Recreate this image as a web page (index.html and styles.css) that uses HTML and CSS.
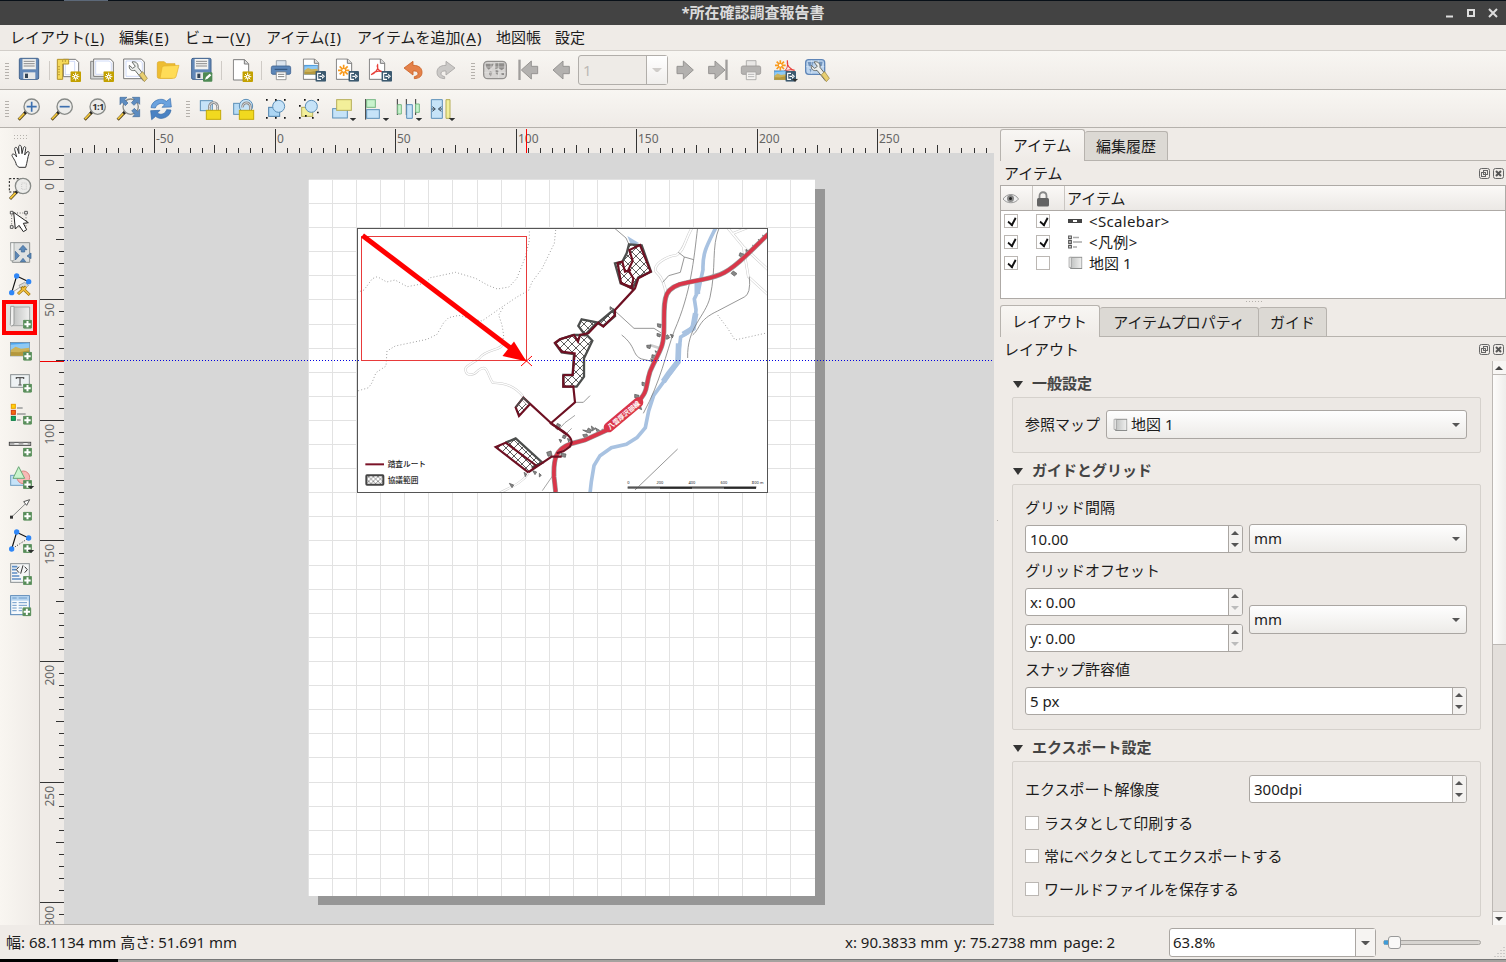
FILE: index.html
```html
<!DOCTYPE html>
<html lang="ja">
<head>
<meta charset="utf-8">
<title>所在確認調査報告書</title>
<link rel="stylesheet" href="styles.css">
</head>
<body>
<svg class="defs" width="0" height="0">
  <defs>
    <symbol id="plus" viewBox="0 0 27 27" width="27" height="27"><rect width="27" height="27" rx="4" fill="#568b58"/><rect x="1.5" y="1.5" width="24" height="24" rx="3" fill="none" stroke="#7aa77b" stroke-width="1.5"/><path d="M13.5 4v19M4 13.5h19" stroke="#fff" stroke-width="6"/></symbol>
    <symbol id="gear" viewBox="0 0 32 32" width="32" height="32"><rect width="32" height="32" rx="3" fill="#c3a100"/><path d="M16 4v24M5 16h22M8 8l16 16M24 8L8 24" stroke="#fff" stroke-width="3"/><circle cx="16" cy="16" r="6" fill="#fff"/><circle cx="16" cy="16" r="2.5" fill="#c3a100"/></symbol>
    <symbol id="export" viewBox="0 0 32 32" width="32" height="32"><rect width="32" height="32" rx="3" fill="#3c5a70"/><path d="M17 7H7v18h10M12 16h13" fill="none" stroke="#fff" stroke-width="3.5"/><path d="M20 8l9 8-9 8z" fill="#fff"/><path d="M21.500 13l3.500 3-3.500 3z" fill="#3c5a70"/></symbol>
    <symbol id="sheet" viewBox="0 0 60 66" width="60" height="66"><path d="M2 2h34l12 12v49H2z" fill="#fff" stroke="#7b7b7b" stroke-width="3"/><path d="M35 2v13h13" fill="#ddd" stroke="#7b7b7b" stroke-width="3"/></symbol>
    <symbol id="lens" viewBox="0 0 72 72" width="72" height="72"><path d="M5 66l22-23" stroke="#5c4a20" stroke-width="9"/><path d="M6 64l20-21" stroke="#f7cb3c" stroke-width="5"/><path d="M22 48l8-9" stroke="#222" stroke-width="8"/><circle cx="44" cy="27" r="23" fill="#ececea" stroke="#888b88" stroke-width="4"/></symbol>
    <symbol id="wrench" viewBox="0 0 60 66" width="60" height="66"><path d="M12 4c10-3 20 4 18 16l23 30-8 9-24-30C10 32 2 26 4 14l10 9 8-6z" fill="#eceeec" stroke="#666a67" stroke-width="3"/><path d="M34 42l10-9 14 20-9 10z" fill="#e9cf70" stroke="#8f7b3c" stroke-width="2"/></symbol>
    <symbol id="drop" viewBox="0 0 20 10" width="20" height="10"><path d="M0 0h20L10 9z" fill="#2e3030"/></symbol>
    <symbol id="arrow" viewBox="0 0 60 60" width="60" height="60"><path d="M2 30L32 3v16h19v22H32v16z" fill="#b3b1af" stroke="#969492" stroke-width="3"/></symbol>
    <symbol id="mapicon" viewBox="0 0 42 38" width="42" height="38"><path d="M8 3h33v33H8z" fill="url(#roll)" stroke="#8a8c8b" stroke-width="3"/><path d="M3 3h7v30H3z" fill="#e7e7e6" stroke="#999" stroke-width="2"/></symbol>
    <symbol id="pic" viewBox="0 0 60 44" width="60" height="44"><rect x="1" y="1" width="58" height="41" fill="#4da6ee" stroke="#6b8196" stroke-width="2"/><path d="M2 8l56-4v20H2z" fill="#8fc9f4"/><path d="M2 24l15-10 16 6 25-3v24H2z" fill="#cdb35a"/><path d="M2 30l25 1 31-6v16H2z" fill="#b5983d"/></symbol>
    <linearGradient id="roll"><stop offset="0" stop-color="#bfc1c0"/><stop offset="1" stop-color="#f1f1f0"/></linearGradient>
    <pattern id="hatch" width="24" height="24" patternUnits="userSpaceOnUse"><path d="M0 0l24 24M24 0L0 24" stroke="#222" stroke-width="2.200"/></pattern>
    <pattern id="hatch-fine" width="14" height="14" patternUnits="userSpaceOnUse"><path d="M0 0l14 14M14 0L0 14" stroke="#333" stroke-width="1.500"/></pattern>
  </defs>
</svg>
<div class="window">
  <div class="desktop-top"></div>
  <header class="titlebar">
    <span class="titlebar-text">*所在確認調査報告書</span>
    <svg class="window-buttons" width="60" height="24" viewBox="1446 1 60 24"><path d="M1445 16.500h8" stroke="#ddd" stroke-width="2"/><rect x="1468" y="10" width="6" height="6" fill="none" stroke="#ddd" stroke-width="2"/><path d="M1489 9l8 8M1497 9l-8 8" stroke="#ddd" stroke-width="2"/></svg>
  </header>
  <nav class="menubar">
    <span>レイアウト(<u>L</u>)</span><span>編集(<u>E</u>)</span><span>ビュー(<u>V</u>)</span><span>アイテム(<u>I</u>)</span><span>アイテムを追加(<u>A</u>)</span><span>地図帳</span><span>設定</span>
  </nav>

  <div class="toolbar toolbar-main">
    <i class="grip first"></i>
    <svg class="tool" viewBox="36 162 99 99"><rect x="58" y="175" width="58" height="63" rx="4" fill="#6288b8" stroke="#43648e" stroke-width="3"/><rect x="67" y="177" width="41" height="31" fill="#f2f2f0" stroke="#8a9bb0" stroke-width="1"/><path d="M71 184h33M71 191h33M71 198h33" stroke="#777" stroke-width="2.500"/><rect x="70" y="217" width="36" height="20" fill="#e6e8e8"/><rect x="75" y="221" width="9" height="13" fill="#345"/></svg>
    <i class="sep"></i>
    <svg class="tool" viewBox="156 162 99 99"><path d="M190 178h37l9 9v43h-46z" fill="#fff" stroke="#777" stroke-width="3"/><path d="M196 184h28v40h-28z" fill="none" stroke="#b9c8f4" stroke-width="2"/><path d="M172 178h34v14h-18v46h-16z" fill="#f5d95a" stroke="#b3922a" stroke-width="3"/><path d="M174 200h6M174 208h6M174 216h6M174 224h6M188 180v6M196 180v6" stroke="#a58422" stroke-width="2"/><use href="#gear" x="211" y="214"/></svg>
    <svg class="tool" viewBox="255 162 99 99"><path d="M272 184h44v53h-44z" fill="#d2d4d3" stroke="#888" stroke-width="3"/><path d="M281 177h50l9 9v43h-59z" fill="#fff" stroke="#777" stroke-width="3"/><path d="M287 183h41l6 6v34h-47z" fill="none" stroke="#b9c8f4" stroke-width="2"/><use href="#gear" x="310" y="214"/></svg>
    <svg class="tool" viewBox="354 162 99 99"><path d="M371 177h53l9 9v50h-62z" fill="#fff" stroke="#777" stroke-width="3"/><path d="M378 183h44l5 6v40h-49z" fill="none" stroke="#b9c8f4" stroke-width="2"/><use href="#wrench" x="384" y="182"/></svg>
    <svg class="tool" viewBox="453 162 99 99"><path d="M472 190q0-5 5-5h15l8 6h25v10l-5 30q-1 4-5 4h-38q-5 0-5-5z" fill="#eebd31" stroke="#d9a520" stroke-width="2"/><path d="M480 235l6-32q1-5 6-5l45-2-9 34q-2 5-7 5z" fill="#ffdc57" stroke="#e3b12d" stroke-width="2"/></svg>
    <svg class="tool" viewBox="552 162 99 99"><rect x="575" y="175" width="58" height="63" rx="4" fill="#6288b8" stroke="#43648e" stroke-width="3"/><rect x="584" y="177" width="41" height="31" fill="#f2f2f0"/><path d="M588 184h33M588 191h33M588 198h33" stroke="#777" stroke-width="2.500"/><rect x="587" y="217" width="36" height="20" fill="#e6e8e8"/><rect x="592" y="221" width="9" height="13" fill="#345"/><rect x="609" y="217" width="28" height="28" rx="3" fill="#4e8a54"/><path d="M615 239l3-8 11-10 5 5-11 10z" fill="#fff"/></svg>
    <i class="sep wide"></i>
    <svg class="tool" viewBox="675 162 99 99"><use href="#sheet" x="698" y="177"/><use href="#gear" x="727" y="214"/></svg>
    <i class="sep narrow"></i>
    <svg class="tool" viewBox="792 162 99 99"><path d="M829 182h29v20h-29z" fill="#dce5ee" stroke="#8894a0" stroke-width="2.500"/><rect x="814" y="198" width="58" height="25" rx="5" fill="#5c86b8" stroke="#3e6392" stroke-width="2.500"/><path d="M824 208h38" stroke="#2f5078" stroke-width="3"/><path d="M829 216h29v23h-29z" fill="#fff" stroke="#888" stroke-width="2.500"/><path d="M834 223h19M834 230h19" stroke="#666" stroke-width="2.500"/></svg>
    <svg class="tool" viewBox="891 162 99 99"><use href="#sheet" x="908" y="175"/><svg x="912" y="194" width="42" height="31" viewBox="0 0 60 44"><use href="#pic"/></svg><use href="#export" x="946" y="213"/></svg>
    <svg class="tool" viewBox="990 162 99 99"><use href="#sheet" x="1007" y="175"/><path d="M1031 194v34M1014 211h34M1019 199l24 24M1043 199l-24 24" stroke="#f99a1c" stroke-width="5"/><circle cx="1031" cy="211" r="4" fill="#fff"/><use href="#export" x="1045" y="213"/></svg>
    <svg class="tool" viewBox="1089 162 99 99"><use href="#sheet" x="1106" y="175"/><path d="M1113 224c14-4 23-18 20-30-5 6 1 18 13 21-10-3-23 0-30 7" fill="none" stroke="#e8403a" stroke-width="3.500"/><use href="#export" x="1144" y="213"/></svg>
    <svg class="tool" viewBox="1188 162 99 99"><path d="M1212 204l27-20v12c20 0 27 10 27 21 0 13-9 18-23 19v-6c8-2 12-5 11-11-1-5-7-7-15-6v12z" fill="#e4814a" stroke="#cb6327" stroke-width="2.500"/></svg>
    <svg class="tool" viewBox="1287 162 99 99"><path d="M1365 204l-27-20v12c-20 0-27 10-27 21 0 13 9 18 23 19v-6c-8-2-12-5-11-11 1-5 7-7 15-6v12z" fill="#cbc9c7" stroke="#a7a5a3" stroke-width="2.500"/></svg>
    <i class="grip mid"></i>
    <svg class="tool" viewBox="84 162 99 99"><rect x="101" y="184" width="68" height="52" rx="12" fill="#d6d4d2" stroke="#92908e" stroke-width="4"/><path d="M107 191h24l-5 11-10 7-8-8zM120 213l7 3-4 14-6-8zM136 190h27v15l-8 6-10-7-9 4zM137 210l10 2-5 13-5-5zM154 219h8v6h-7z" fill="#8f8d8b"/><path d="M103 201h64M103 218h64M123 186v48M146 186v48" stroke="#e9e7e5" stroke-width="1.500"/></svg>
    <svg class="tool" viewBox="183 162 99 99"><path d="M205 179h7v61h-7z" fill="#a09e9c"/><use href="#arrow" x="212" y="180"/></svg>
    <svg class="tool" viewBox="282 162 99 99"><use href="#arrow" x="307" y="180"/></svg>
    <div class="page-combo"><span>1</span><b></b></div>
    <svg class="tool" viewBox="654 162 99 99"><use href="#arrow" transform="translate(732 180) scale(-1 1)"/></svg>
    <svg class="tool" viewBox="753 162 99 99"><use href="#arrow" transform="translate(827 180) scale(-1 1)"/><path d="M826 179h7v61h-7z" fill="#a09e9c"/></svg>
    <svg class="tool" viewBox="852 162 99 99"><path d="M889 182h29v20h-29z" fill="#e9e7e5" stroke="#a5a3a1" stroke-width="2.500"/><rect x="874" y="198" width="58" height="25" rx="5" fill="#b5b3b1" stroke="#9a9896" stroke-width="2.500"/><path d="M889 216h29v23h-29z" fill="#f5f3f1" stroke="#a5a3a1" stroke-width="2.500"/><path d="M894 223h19M894 230h19" stroke="#aaa" stroke-width="2.500"/></svg>
    <svg class="tool" viewBox="951 162 99 99"><path d="M991 181v31M975 196h32M980 185l22 22M1002 185l-22 22" stroke="#f99a1c" stroke-width="5"/><circle cx="991" cy="196" r="4" fill="#fff"/><path d="M997 218c12-6 19-20 15-37-3 16 8 27 22 30-12-3-26-1-33 6" fill="none" stroke="#e8403a" stroke-width="3.500"/><svg x="972" y="211" width="38" height="30" viewBox="0 0 60 44" preserveAspectRatio="none"><use href="#pic"/></svg><use href="#export" x="1006" y="213"/><use href="#drop" x="1025" y="236"/></svg>
    <svg class="tool" viewBox="1050 162 99 99"><rect x="1067" y="179" width="57" height="44" rx="9" fill="#bcd4ee" stroke="#5f86b8" stroke-width="4"/><path d="M1073 186h18l-4 12-10 2zM1104 185h14l-3 14-11-3zM1078 207l8 1-3 10z" fill="#7194bd"/><path d="M1068 200h55M1085 181v40M1105 181v40" stroke="#e6f0fa" stroke-width="1.500"/><use href="#wrench" x="1080" y="182"/></svg>
  </div>

  <div class="toolbar toolbar-nav">
    <i class="grip first"></i>
    <svg class="tool" viewBox="36 276 99 99"><use href="#lens" x="51" y="293"/><path d="M95 305v30M80 320h30" stroke="#3d70b0" stroke-width="5"/></svg>
    <svg class="tool" viewBox="135 276 99 99"><use href="#lens" x="150" y="293"/><path d="M179 320h30" stroke="#3d70b0" stroke-width="5"/></svg>
    <svg class="tool" viewBox="234 276 99 99"><use href="#lens" x="249" y="293"/><text x="294" y="330" text-anchor="middle" class="one-one">1:1</text></svg>
    <svg class="tool" viewBox="333 276 99 99"><use href="#lens" x="348" y="293"/><path d="M360 292h21l-7 7 10 10-8 8-10-10-6 7zM419 292v21l-7-7-10 10-8-8 10-10-7-6zM419 350h-21l7-7-10-10 8-8 10 10 6-7z" fill="#5d8cc0" stroke="#41699a" stroke-width="2"/></svg>
    <svg class="tool" viewBox="432 276 99 99"><path d="M453 323c2-22 32-33 46-19l12-9 3 26-28 1 8-8c-12-9-25 0-28 10z" fill="#6ba2de" stroke="#3b70ad" stroke-width="2"/><path d="M513 330c-2 22-32 33-46 19l-12 10-3-27 28-1-8 8c12 9 25 0 28-10z" fill="#4a82c3" stroke="#3268a5" stroke-width="2"/></svg>
    <i class="grip mid"></i>
    <svg class="tool" viewBox="579 276 99 99"><rect x="601" y="302" width="36" height="30" fill="#c6e3f8" stroke="#5b8fb8" stroke-width="3"/><path d="M628 332v-10c0-19 25-19 25 0v10" fill="none" stroke="#888" stroke-width="8"/><path d="M628 332v-10c0-19 25-19 25 0v10" fill="none" stroke="#e4e4e4" stroke-width="3"/><rect x="619" y="331" width="43" height="27" fill="#f1d91f" stroke="#c5aa08" stroke-width="3"/></svg>
    <svg class="tool" viewBox="678 276 99 99"><rect x="701" y="310" width="32" height="33" fill="#b7dbf5" stroke="#5b8fb8" stroke-width="3"/><circle cx="738" cy="318" r="20" fill="#c6e3f8" stroke="#5b8fb8" stroke-width="3"/><path d="M751 332v-12c-1-17-25-14-23 2" fill="none" stroke="#888" stroke-width="8"/><path d="M751 332v-12c-1-17-25-14-23 2" fill="none" stroke="#e4e4e4" stroke-width="3"/><rect x="718" y="331" width="43" height="27" fill="#f1d91f" stroke="#c5aa08" stroke-width="3"/></svg>
    <svg class="tool" viewBox="777 276 99 99"><rect x="806" y="322" width="33" height="27" fill="#acd6f4" stroke="#4a7fab" stroke-width="3"/><circle cx="836" cy="319" r="18" fill="#c6e3f8" stroke="#5b8fb8" stroke-width="3"/><path d="M798 297h5v5h-5zM852 297h5v5h-5zM825 297h5v5h-5zM798 351h5v5h-5zM825 351h5v5h-5zM852 351h5v5h-5z" fill="#111"/></svg>
    <svg class="tool" viewBox="876 276 99 99"><rect x="905" y="322" width="33" height="27" fill="#f3ef9a" stroke="#b5ad57" stroke-width="3"/><circle cx="934" cy="319" r="18" fill="#c6e3f8" stroke="#5b8fb8" stroke-width="3"/><path d="M912 297h5v5h-5zM952 297h5v5h-5zM897 315h5v5h-5zM951 335h5v5h-5zM897 351h5v5h-5zM915 345h5v5h-5zM936 351h5v5h-5z" fill="#111"/></svg>
    <svg class="tool" viewBox="975 276 99 99"><rect x="998" y="326" width="44" height="28" fill="#c6e3f8" stroke="#5b8fb8" stroke-width="3"/><rect x="1010" y="299" width="44" height="32" fill="#f3ef9a" stroke="#b5ad57" stroke-width="3"/><use href="#drop" x="1049" y="354"/></svg>
    <svg class="tool" viewBox="1074 276 99 99"><path d="M1097 297v62" stroke="#333" stroke-width="3"/><rect x="1100" y="299" width="26" height="23" fill="#c8f3cd" stroke="#76b783" stroke-width="3"/><rect x="1100" y="329" width="38" height="26" fill="#c6e3f8" stroke="#5b8fb8" stroke-width="3"/><use href="#drop" x="1148" y="354"/></svg>
    <svg class="tool" viewBox="1173 276 99 99"><path d="M1192 297v48M1219 297v48M1247 297v48" stroke="#333" stroke-width="3"/><path d="M1193 314h11v28h-11zM1247 312h11v25h-11z" fill="#c8f3cd" stroke="#76b783" stroke-width="3"/><path d="M1220 314h17v41h-17z" fill="#c6e3f8" stroke="#5b8fb8" stroke-width="3"/><use href="#drop" x="1247" y="354"/></svg>
    <svg class="tool" viewBox="1272 276 99 99"><path d="M1294 299h33v56h-33z" fill="#c6e3f8" stroke="#5b8fb8" stroke-width="3"/><path d="M1338 299h12v56h-12z" fill="#f3ef9a" stroke="#b5ad57" stroke-width="3"/><path d="M1297 320l9 7-9 7M1324 320l-9 7 9 7" fill="none" stroke="#345" stroke-width="3"/><path d="M1295 327h8M1326 327h-8" stroke="#345" stroke-width="3"/><use href="#drop" x="1346" y="354"/></svg>
  </div>

  <main class="body">
    <aside class="toolbox">
      <i class="hgrip"></i>
      <svg class="vtool" viewBox="12 63 99 96"><path d="M49 135C48 122 34 109 36 104c4-5 10 1 14 7L44 88c-1-7 6-8 8-2l5 15-1-20c0-7 7-7 8 0l2 20 4-17c2-6 8-5 7 2l-3 19 7-9c4-3 8 0 6 5-4 10-5 25-10 41H57z" fill="#fff" stroke="#333" stroke-width="3"/></svg>
      <svg class="vtool" viewBox="12 159 99 96"><path d="M28 176h38v40H28z" fill="none" stroke="#111" stroke-width="3" stroke-dasharray="6 5"/><use href="#lens" x="25" y="171"/><path d="M65 189h14v19H65z" fill="none" stroke="#bbb" stroke-width="2" stroke-dasharray="3"/></svg>
      <svg class="vtool" viewBox="12 255 99 96"><path d="M35 279h43v42H35z" fill="none" stroke="#666" stroke-width="3" stroke-dasharray="3 5"/><path d="M31 274h8v8h-8zM74 274h8v8h-8zM31 317h8v8h-8z" fill="#fff" stroke="#555" stroke-width="3"/><path d="M41 277l5 50 11-11 13 19 10-6-10-19 15-2z" fill="#fff" stroke="#222" stroke-width="3"/></svg>
      <svg class="vtool" viewBox="12 351 99 96"><path d="M32 368h57v59H37z" fill="#dfe1e0" stroke="#8d9190" stroke-width="3"/><path d="M32 368h10v54H32z" fill="#f5f5f4" stroke="#8d9190" stroke-width="2"/><path d="M69 376l12 13h-7v7H64v-7h-7zM46 394l12 13-12 13zM93 399v17l-12-8zM61 425l8-10 8 10z" fill="#5c89b8" stroke="#38618f" stroke-width="2"/></svg>
      <svg class="vtool" viewBox="12 447 99 96"><path d="M35 518l15-50 36 17" fill="none" stroke="#111" stroke-width="3.500"/><path d="M35 518l50-32" stroke="#444" stroke-width="3" stroke-dasharray="3 4"/><path d="M57 496l17-9 12 9-9 8-8-4-7 4z" fill="#d7d9d8" stroke="#888" stroke-width="2"/><path d="M54 522l24-22M64 501l25 24" stroke="#96700c" stroke-width="9"/><path d="M55 521l23-20M66 503l22 21" stroke="#f1bd3b" stroke-width="5"/><g fill="#2f86f6"><circle cx="50" cy="468" r="8"/><circle cx="86" cy="485" r="8"/><circle cx="35" cy="518" r="8"/></g></svg>
      <svg class="vtool active" viewBox="15 549 87 87"><path d="M38 561h51v56H38z" fill="url(#roll)" stroke="#a4a6a5" stroke-width="3"/><path d="M32 559h10v54l-7 6-4-5z" fill="#f0f0ef" stroke="#9a9c9b" stroke-width="3"/><use href="#plus" x="69" y="599"/></svg>
      <svg class="vtool" viewBox="12 639 99 96"><use href="#pic" x="30" y="666"/><use href="#plus" x="69" y="695"/></svg>
      <svg class="vtool" viewBox="12 -15 99 96"><rect x="32" y="14" width="56" height="38" fill="#eef2f4" stroke="#8a9092" stroke-width="3"/><path d="M49 27v-4h22v4M60 23v22M55 45h10" fill="none" stroke="#555" stroke-width="3.500"/><use href="#plus" x="69" y="41"/></svg>
      <svg class="vtool" viewBox="12 81 99 96"><path d="M51 114h17M51 132h26M51 150h11" stroke="#999b9a" stroke-width="5"/><g stroke-width="3"><rect x="34" y="103" width="12" height="12" fill="#ffd20b" stroke="#e99d00"/><rect x="34" y="121" width="12" height="12" fill="#f26b11" stroke="#cf3a0b"/><rect x="34" y="139" width="12" height="12" fill="#0ea65d" stroke="#087a40"/></g><use href="#plus" x="69" y="137"/></svg>
      <svg class="vtool" viewBox="12 177 99 96"><rect x="28" y="217" width="64" height="9" fill="#f1f1f0" stroke="#444" stroke-width="3"/><path d="M30 221.500h13M56 221.500h14M83 221.500h8" stroke="#aaa" stroke-width="6"/><use href="#plus" x="69" y="233"/></svg>
      <svg class="vtool" viewBox="12 273 99 96"><rect x="32" y="316" width="40" height="30" fill="#c6e3f8" stroke="#6f9ec2" stroke-width="3"/><circle cx="70" cy="322" r="19" fill="#f7b9b6" stroke="#dc8580" stroke-width="3"/><path d="M56 290l18 35H39z" fill="#c9f4cd" stroke="#68a876" stroke-width="3"/><use href="#plus" x="69" y="330"/><use href="#drop" x="83" y="348"/></svg>
      <svg class="vtool" viewBox="12 369 99 96"><path d="M35 441l46-44" stroke="#858786" stroke-width="3"/><path d="M89 389l-18 6 9 11z" fill="#fff" stroke="#555" stroke-width="3"/><rect x="30" y="437" width="9" height="9" fill="#333"/><use href="#plus" x="69" y="425"/></svg>
      <svg class="vtool" viewBox="12 465 99 96"><path d="M35 537l15-50 36 17" fill="none" stroke="#111" stroke-width="3.500"/><path d="M38 535l47-30" stroke="#222" stroke-width="3" stroke-dasharray="3 5"/><g fill="#2f86f6"><circle cx="50" cy="486" r="8"/><circle cx="86" cy="504" r="8"/><circle cx="35" cy="537" r="8"/></g><use href="#plus" x="69" y="522"/><use href="#drop" x="83" y="540"/></svg>
      <svg class="vtool" viewBox="12 561 99 96"><rect x="32" y="581" width="56" height="56" fill="#f4f6f7" stroke="#8a9092" stroke-width="3"/><path d="M36 590h16M36 599h12M36 609h16M36 618h22M36 627h27" stroke="#5b8cc4" stroke-width="5"/><path d="M57 590l-8 9 8 9M74 590l8 9-8 9M69 586l-7 25" fill="none" stroke="#333" stroke-width="3"/><use href="#plus" x="69" y="618"/></svg>
      <svg class="vtool" viewBox="12 657 99 96"><rect x="32" y="677" width="56" height="57" fill="#f7fafc" stroke="#5384b5" stroke-width="3"/><path d="M33 678h54v14H33z" fill="#b4d3ef"/><path d="M37 684h13M56 684h25M37 698h13M56 698h25M37 706h13M56 706h25M37 714h13M56 714h10M37 722h13M56 722h10" stroke="#6f9bc9" stroke-width="3"/><use href="#plus" x="67" y="712"/></svg>
    </aside>

    <section class="stage">
      <svg id="ruler-h" class="ruler-h" viewBox="40 128 954 25"></svg>
      <svg id="ruler-v" class="ruler-v" viewBox="40 153 24 771"></svg>
      <svg class="canvas" viewBox="64 153 930 771">
        <path d="M318 189h507v716H318z" fill="#969696"/>
        <path d="M309 180h506v716H309z" fill="#fff"/>
        <g id="grid" fill="#e2e2e2"></g>
        <rect x="357.500" y="228.500" width="410" height="264" fill="#fff" stroke="#555" shape-rendering="crispEdges"/>
        <svg x="358" y="229" width="409" height="263" viewBox="358 229 409 263">
          <g transform="translate(350 220) scale(.33333)" fill="none">
            <g stroke="#777" stroke-width="2.500" stroke-dasharray="2.500 7"><path d="M22 217l20-7 25-34 15-6 28 16 25-6 37 20 52-10 18-17 75-16 60 18 35 20 30 12 35-6 23-25 26-65 12-50V28"/><path d="M617 30l-4 40-37 76-30 40-10 25-35 20-45 30-60 42-25-5-45-12-30 7-15 15-20 35-30 15-95 20-25 15-3 45-30 20-12 30-10 15-40 12"/><path d="M458 265l-12 20 10 30 5 30-5 30"/></g>
            <path d="M458 370c0 22-50 16-70 45-20 15-45 24-42 35 4 20 26 16 38 2 30-24 26 10 44 36 40 2 66 10 92 42M535 760c-20 30-50 40-85 58" stroke="#ccc" stroke-width="7"/><path d="M458 370c0 22-50 16-70 45-20 15-45 24-42 35 4 20 26 16 38 2 30-24 26 10 44 36 40 2 66 10 92 42M535 760c-20 30-50 40-85 58" stroke="#fff" stroke-width="4"/>
            <path d="M577 812l38-55M625 630l20-22 30-22M640 650l25-25" stroke="#777" stroke-width="2"/>
          </g>
          <g transform="translate(560 220) scale(.33333)" fill="none">
            <g stroke="#ccc" stroke-width="8"><path d="M395 25c-22 40-22 65-45 80-35 5-72 30-62 50 15 14 28 40 30 70"/><path d="M500 20l50 60 75 70M520 40l50-20M550 80l15 90 60 55M555 120l-5-40"/><path d="M305 360l35-15M270 375l30 10"/></g>
            <g stroke="#fff" stroke-width="5"><path d="M395 25c-22 40-22 65-45 80-35 5-72 30-62 50 15 14 28 40 30 70"/><path d="M500 20l50 60 75 70M520 40l50-20M550 80l15 90 60 55M305 360l35-15"/></g>
            <path d="M467 24c-26 52-40 75-38 125l-13 60-13 28 5 32-3 40-23 30-20 12-5 40-3 35-20 30-25 32-28 38-15 47-10 50-25 30-32 20-45 10-34 24-18 30-8 48-4 35" stroke="#a8c2e1" stroke-width="11"/>
            <path d="M412 180v42M407 280l-8 45-30 18M356 370l-2 55-28 36-16 24" stroke="#a8c2e1" stroke-width="17"/><path d="M202 48l36 22-25 5z" fill="#a8c2e1"/>
            <g stroke="#777" stroke-width="2.300"><path d="M413 22c-12 100-20 195-70 310-26 70-40 150-93 248"/><path d="M478 22c-25 60-8 120-28 210-14 58-70 90-67 182"/><path d="M568 170q5 52-15 61l-80 42c-60 28-50 50-75 72"/><path d="M163 24l35 30 10 22M355 97l18 14 28 8M373 111l-12 46-35 10-18 20M152 261l70 64h60l22 14M185 345c45 35 30 60 60 72l45 10M45 547l25 0 20-20M225 810l128-123"/></g>
            <path d="M473 285l30 40 22 35 90-20" stroke="#777" stroke-width="2.500" stroke-dasharray="2.500 7"/>
            <g fill="#888" stroke="#555" stroke-width="2"><path d="M540 98l12 5-5 9-10-5zM558 88l10 7-8 8zM578 75l12 8-8 8zM595 58l10 8-7 8zM608 45l8 5-5 8zM520 153l11 8-8 7-10-8zM292 311l12 2-2 10-9-3zM291 340l11 3-2 8-9-3zM312 352l11-8 6 9-8 5zM331 343l9 3-3 8zM260 376l13-1-3 11-9-3zM276 404l10 2-2 10-9-2zM285 392l10 5-4 8zM272 416l8 3-5 7zM246 486l12 4-3 9-9-3zM224 523l13 3-3 10-10-3zM68 630l13 2 4-8 10 6-4 9-10-2zM94 618l11 9-8 6zM68 644l13-2 3 13-11-2zM105 623l14 8-6 7zM126 627l8 4-5 6zM3 700l15 2-2 10-13-3zM-40 697l13-4 3 13-12 3zM-62 760l6 6-6 5zM-152 790l13 5-5 8zM-108 757l8 5-4 8zM-82 752l12 4-5 8zM232 563l10-4 3 10zM-8 610l10 5-8 15-8-6zM10 645l9 3-4 8-8-3zM22 655l9 4-5 7zM-3 658l8 2-3 8zM150 260l8 5-8 4z"/></g>
            <path d="M625 42l-65 63c-55 53-80 63-130 73l-50 10c-75 13-67 50-68 132 0 70-15 70-42 135-16 50-2 55-40 95l-85 78-70 32-45 12c-42 15-50 45-48 98l5 46" stroke="#999" stroke-width="15"/><path d="M625 42l-65 63c-55 53-80 63-130 73l-50 10c-75 13-67 50-68 132 0 70-15 70-42 135-16 50-2 55-40 95l-85 78-70 32-45 12c-42 15-50 45-48 98l5 46" stroke="#da3649" stroke-width="11"/>
            <path d="M146 622l89-75" stroke="#da3649" stroke-width="30" stroke-linecap="round"/>
            <text class="road-name" text-anchor="middle" transform="translate(196 591) rotate(-40)">八雲厚沢部線</text>
            <g fill="url(#hatch)" stroke="#4c4e4d" stroke-width="7"><path d="M207 73l38 3 28 79-38 17-18 33-35-15-17-60 22-5 13-25z"/><path d="M65 298l50 10 45-38 5 18-35 30-20-10-35 37-20-27z"/><path d="M-15 370l15-12 40-13 40 0 17 17-25 53v55l-22 30H10v-35h28l4-63-37-5z"/></g>
            <g stroke="#6d1022" stroke-width="6.500"><path d="M10 465h28l6-65-39-5-20-27 15-10 42-13 12 20 6-20 25-5 30-32 15 12 35-35v-15l60-65 10-30 37-20-32-80-32 15 10 33-13 27 15 25-5 27-32-13-10-60 14-4 8 30 18-5M10 465v35h30l5 47-75 65"/><path d="M182 188l38 20M-25 612l35 22q25 18 25 32l-5 14-20 14-20 6M-25 612l35 22"/></g>
            <g><path d="M203 802h386" stroke="#777" stroke-width="6"/><path d="M203 804h97M396 804h96" stroke="#333" stroke-width="3"/><path d="M300 804h96M492 804h96" stroke="#111" stroke-width="5"/></g>
            <g class="scale-text" text-anchor="middle"><text x="205" y="792">0</text><text x="300" y="792">200</text><text x="396" y="792">400</text><text x="492" y="792">600</text><text x="593" y="792">800 m</text></g>
          </g>
          <g transform="translate(350 220) scale(.33333)">
            <path d="M437 680l60-25 80 73-32 17-10 12z" fill="url(#hatch)"/><path d="M467 668l30-13 80 73-32 15" fill="none" stroke="#4c4e4d" stroke-width="7"/>
            <path d="M535 757l-98-76 30-13 93 70-25 19M520 533l-23 29 10 26 33-36zM535 757l70-47h30M520 533l86 79 45 33" fill="none" stroke="#6d1022" stroke-width="6.500"/><path d="M516 540l18 18-27 24-8-20z" fill="url(#hatch)"/><path d="M497 562l23-29 18 17" fill="none" stroke="#4c4e4d" stroke-width="5"/>
            <path d="M46 733h56" stroke="#7b1328" stroke-width="6"/><rect x="49" y="766" width="51" height="28" rx="2" fill="url(#hatch-fine)" stroke="#444" stroke-width="6"/>
            <g class="legend-text"><text x="113" y="741">踏査ルート</text><text x="113" y="789">協議範囲</text></g>
          </g>
        </svg>
        <path d="M64 360.500h930" stroke="#0000e0" stroke-dasharray="1 2"/>
        <rect x="361.500" y="236.500" width="165" height="124" fill="none" stroke="#e83a3a"/>
        <path d="M521 356l11 10M532 356l-11 10" stroke="#f00"/>
        <path d="M362.500 235.500l150 114" stroke="#f00" stroke-width="5"/><path d="M526.500 361.500l-12.500-20-11.500 14.500z" fill="#f00"/>
      </svg>
    </section>

    <section class="panels">
      <div class="tabs upper"><span class="tab on t1">アイテム</span><span class="tab t2">編集履歴</span></div>
      <div class="dock-title"><span>アイテム</span><svg width="26" height="12" viewBox="0 0 26 12" class="dock-buttons"><g fill="none" stroke="#666"><rect x=".5" y=".5" width="10" height="10" rx="2"/><rect x="4.500" y="2.500" width="4" height="4"/><rect x="2.500" y="4.500" width="4" height="4"/><rect x="14.500" y=".5" width="10" height="10" rx="2"/></g><path d="M17 3l5 5M22 3l-5 5" stroke="#555" stroke-width="2"/></svg></div>
      <div class="table">
        <div class="thead">
          <span class="th c1"><svg width="16" height="12" viewBox="0 0 16 12"><path d="M0 6c4-6 12-6 15.500 0C12 11 4 11 0 6z" fill="#eee" stroke="#999"/><circle cx="7.500" cy="5.500" r="3.500" fill="#888"/><circle cx="7.500" cy="5.500" r="1.500" fill="#222"/></svg></span>
          <span class="th c2"><svg width="12" height="16" viewBox="0 0 12 16"><path d="M2.500 8V5c0-5 7-5 7 0v3" fill="none" stroke="#888" stroke-width="1.800"/><rect y="7" width="12" height="8.500" rx="1.500" fill="#636363"/></svg></span>
          <span class="c3">アイテム</span>
        </div>
        <div class="tr"><i class="check on"></i><i class="check on"></i><svg width="15" height="14" viewBox="0 0 15 14"><path d="M0 5h14v4H0z" fill="#444"/><path d="M5 6h4v2H5z" fill="#fff"/></svg><span class="lt">&lt;Scalebar&gt;</span></div>
        <div class="tr"><i class="check on"></i><i class="check on"></i><svg width="15" height="14" viewBox="0 0 15 14"><path d="M.7 1h2.600v2.600H.7zM.7 5.700h2.600v2.600H.7zM.7 10.400h2.600V13H.7z" fill="#fff" stroke="#555" stroke-width="1.200"/><path d="M5 2.500h6M5 7h9M5 12h4" stroke="#aaa" stroke-width="1.500"/></svg><span class="lt">&lt;凡例&gt;</span></div>
        <div class="tr"><i class="check on"></i><i class="check"></i><svg width="15" height="14" viewBox="0 0 44 40"><use href="#mapicon"/></svg><span>地図 1</span></div>
      </div>
      <div class="splitter"></div>
      <div class="tabs lower"><span class="tab on t3">レイアウト</span><span class="tab t4">アイテムプロパティ</span><span class="tab t5">ガイド</span></div>
      <div class="dock-title lower-title"><span>レイアウト</span><svg width="26" height="12" viewBox="0 0 26 12" class="dock-buttons"><g fill="none" stroke="#666"><rect x=".5" y=".5" width="10" height="10" rx="2"/><rect x="4.500" y="2.500" width="4" height="4"/><rect x="2.500" y="4.500" width="4" height="4"/><rect x="14.500" y=".5" width="10" height="10" rx="2"/></g><path d="M17 3l5 5M22 3l-5 5" stroke="#555" stroke-width="2"/></svg></div>
      <div class="scroll">
        <div class="form">
          <h2 class="first-head">一般設定</h2>
          <div class="group g-general"><label>参照マップ</label><div class="combo"><svg width="15" height="14" viewBox="0 0 44 40"><use href="#mapicon"/></svg><span>地図 1</span></div></div>
          <h2>ガイドとグリッド</h2>
          <div class="group g-grid">
            <label class="row-label">グリッド間隔</label>
            <div class="pair"><div class="spin"><span>10.00</span><b></b></div><div class="combo">mm</div></div>
            <label class="row-label">グリッドオフセット</label>
            <div class="pair"><div class="stack"><div class="spin at-min"><span>x: 0.00</span><b></b></div><div class="spin at-min"><span>y: 0.00</span><b></b></div></div><div class="combo">mm</div></div>
            <label class="row-label last">スナップ許容値</label>
            <div class="spin"><span>5 px</span><b></b></div>
          </div>
          <h2>エクスポート設定</h2>
          <div class="group g-export">
            <div class="pair"><label>エクスポート解像度</label><div class="spin"><span>300dpi</span><b></b></div></div>
            <label class="option"><i class="check"></i>ラスタとして印刷する</label>
            <label class="option"><i class="check"></i>常にベクタとしてエクスポートする</label>
            <label class="option"><i class="check"></i>ワールドファイルを保存する</label>
          </div>
        </div>
        <div class="scrollbar"><i class="sb-up"></i><i class="sb-thumb"></i><i class="sb-track"></i><i class="sb-down"></i></div>
      </div>
    </section>
  </main>

  <footer class="status">
    <span class="size-text">幅: 68.1134 mm 高さ: 51.691 mm</span>
    <span class="pos-text"><span>x: 90.3833 mm</span><span>y: 75.2738 mm</span><span>page: 2</span></span>
    <div class="zoom-combo"><span>63.8%</span><b></b></div>
    <svg class="slider" width="123" height="34" viewBox="1383 925 123 34"><rect x="1383.500" y="940.500" width="97" height="4" rx="2" fill="#d7d4d0" stroke="#a9a6a2"/><path d="M1384 942.500h8" stroke="#3f9cd8" stroke-width="4"/><rect x="1388.500" y="936.500" width="12" height="12" rx="2.500" fill="#f9f8f7" stroke="#999"/><path d="M1504 947v10M1501 950v7M1498 953v4M1495 956v1" stroke="#aaa" stroke-dasharray="1 2"/></svg>
  </footer>
  <div class="desktop-bottom"><i></i></div>
</div>
<script src="rulers.js"></script>
</body>
</html>
```
FILE: styles.css
```css
* { box-sizing: border-box; }
body {
  margin: 0;
  font: 15px/20px "Noto Sans", "Noto Sans CJK JP", sans-serif;
  color: #1c1c1c;
  background: #efebe7;
}
.defs { position: absolute; }
.window { width: 1506px; height: 962px; display: flex; flex-direction: column; overflow: hidden; white-space: nowrap; }
.desktop-top { height: 1px; background: linear-gradient(90deg, #081018 64px, #5c6878 64px 108px, #081018 108px); }
.titlebar { height: 24px; background: #434343; display: flex; align-items: center; justify-content: flex-end; }
.titlebar-text { flex: 1; text-align: center; padding: 0 0 2px 60px; font-weight: 700; color: #dcdcdc; line-height: 22px; }
.menubar { height: 26px; border-bottom: 1px solid #d2cec9; background: #efebe7; display: grid; grid-template-columns: 109px 66px 81px 91px 139px 59px auto; padding: 2px 0 0 10px; }
.menubar u { text-decoration-thickness: 1px; text-underline-offset: 2px; margin: 0 1.2px; }

.toolbar { display: flex; align-items: flex-start; border-bottom: 1px solid #b5b1ac; background: linear-gradient(#f8f6f2, #efebe7); }
.toolbar-main { height: 39px; padding-top: 3px; }
.toolbar-nav { height: 38px; padding-top: 2px; }
.tool { width: 33px; height: 33px; flex: none; }
.grip { height: 17px; flex: none; margin-top: 8px; background: radial-gradient(circle, #b5b1ac .7px, transparent .9px) 0 0 / 2px 3px; background-origin: content-box; background-clip: content-box; }
.grip.first { width: 12px; padding: 0 3px 0 5px; }
.grip.mid { width: 16px; padding: 0 3px 0 9px; }
.sep { width: 7px; height: 19px; margin-top: 7px; flex: none; background: linear-gradient(#cfcbc6, #cfcbc6) 4px 0 / 1px 100% no-repeat; }
.sep.wide { width: 8px; }
.sep.narrow { width: 6px; background-position-x: 3px; }
.one-one { font: 700 28px "Noto Sans", sans-serif; letter-spacing: -2px; fill: #333; }
.page-combo { width: 90px; height: 30px; margin: 1px 0 0 1px; border: 1px solid #b1aeaa; border-radius: 3px; display: flex; color: #bdb9b5; background: #eeebe7; line-height: 29px; }
.page-combo span { flex: 1; padding-left: 4px; border-right: 1px solid #b1aeaa; }
.page-combo b { width: 20px; background: linear-gradient(#fff, #f0eeec); }
.page-combo b::after, .zoom-combo b::after, .combo::after { content: ""; display: block; border: 4.5px solid transparent; border-top: 4.5px solid #555; border-bottom: 0; }
.page-combo b::after { margin: 12px 5px; border-top-color: #d0cdca; }

.body { height: 797px; display: flex; }
.toolbox { width: 40px; border-right: 1px solid #b3afab; background: linear-gradient(90deg, #f9f6f1, #efebe7); display: flex; flex-direction: column; padding-left: 4px; }
.hgrip { height: 13px; margin: 0 10px 0 9px; background: radial-gradient(circle, #b5b1ac .7px, transparent .9px) 0 0 / 3px 3px; border-top: 6px solid #f4f0ec; border-bottom: 2px solid #f4f0ec; }
.vtool { width: 33px; height: 32px; flex: none; }
.vtool.active { outline: 4px solid #f00; outline-offset: -1px; width: 29px; height: 29px; margin: 2px 0 1px 1px; background: #e3e0dd; overflow: hidden; }
.stage { width: 954px; display: grid; grid-template: 25px 771px / 24px 930px; align-content: start; border-bottom: 1px solid #b3afab; }
.ruler-h { grid-column: 1 / 3; width: 954px; height: 25px; background: #efebe7; }
.ruler-v { width: 24px; height: 771px; background: #efebe7; }
.ruler-h text, .ruler-v text { font: 12px "Noto Sans", sans-serif; fill: #666; }
.canvas { width: 930px; height: 771px; background: #d7d7d7; }
.road-name { font: 700 20px "Noto Sans CJK JP", sans-serif; fill: #fff; }
.scale-text { font: 12px "Noto Sans", sans-serif; fill: #222; }
.legend-text { font: 500 23px "Noto Sans CJK JP", sans-serif; fill: #222; }

.panels { flex: 1; display: flex; flex-direction: column; padding-left: 6px; background: radial-gradient(circle, #b5b1ac .7px, transparent .9px) 2px 391px / 3px 3px no-repeat, #efebe7; }
.tabs { height: 33px; display: flex; align-items: flex-end; border-bottom: 1px solid #b7b3ae; flex: none; }
.tab { height: 29px; border: 1px solid #b7b3ae; border-bottom: 0; border-left-width: 0; border-radius: 3px 3px 0 0; background: #dcd9d4; text-align: center; line-height: 28px; }
.tab.on { height: 32px; margin-bottom: -1px; border-left-width: 1px; background: linear-gradient(#f8f6f3, #efebe7); line-height: 31px; padding-right: 1px; }
.t1 { width: 85px; } .t2 { width: 83px; } .t3 { width: 100px; } .t4 { width: 159px; } .t5 { width: 68px; }
.dock-title { height: 24px; flex: none; display: flex; justify-content: space-between; padding: 2px 1px 0 4px; }
.dock-buttons { margin-top: 5px; }
.table { height: 114px; flex: none; border: 1px solid #aeaaa6; background: #fff; }
.thead { height: 25px; display: flex; align-items: center; border-bottom: 1px solid #aeaaa6; background: linear-gradient(#fbf9f7, #ebe8e5); }
.th { height: 24px; width: 32px; border-right: 1px solid #cac6c2; padding: 7px 0 0 2px; line-height: 0; }
.th.c2 { padding: 5px 0 0 4px; }
.c3 { padding-left: 2px; }
.tr { height: 21px; display: flex; align-items: center; padding-bottom: 1px; }
.tr .check { margin: 0 15px 0 3px; }
.tr svg { margin: 0 6px 0 4px; }
.tr span { margin-top: -1px; }
.tr .check + .check { margin-right: 14px; }
.check { width: 14px; height: 14px; flex: none; border: 1px solid #bbb7b3; background: #fff; }
.check.on::after { content: ""; display: block; width: 4px; height: 7px; margin: 1px 0 0 4px; border: solid #111; border-width: 0 2.2px 2.2px 0; transform: rotate(28deg) skewY(12deg); }
.lt { letter-spacing: .35px; }
.splitter { height: 5px; flex: none; background: radial-gradient(circle, #b5b1ac .7px, transparent .9px) 245px 1px / 3px 3px; clip-path: inset(0 243px 1px 245px); }
.lower { height: 33px; }
.lower-title { height: 24px; }
.scroll { flex: 1; display: flex; }
.form { width: 492px; padding: 0 11px 0 12px; }
h2 { height: 26px; margin: 5px 0 0; padding-bottom: 2px; font-size: 15px; line-height: 24px; color: #444; display: flex; align-items: center; }
h2::before { content: ""; border: 5.5px solid transparent; border-top: 7px solid #333; border-bottom: 0; margin: 2px 9px 0 1px; }
h2.first-head { margin-top: 10px; }
.group { border: 1px solid #d5d1cc; border-radius: 2px; background: #ece8e4; padding: 12px 13px 0 12px; }
.g-general { height: 56px; display: flex; align-items: flex-start; }
.g-general label { width: 81px; line-height: 28px; }
.g-general .combo { flex: 1; }
.g-general svg { margin: 1px 3px 0 2px; }
.g-grid { height: 246px; }
.g-export { height: 156px; }
.combo { height: 29px; border: 1px solid #aaa6a2; border-radius: 3px; background: linear-gradient(#fefefe, #edebe8); display: flex; align-items: center; padding: 0 6px 1px 4px; line-height: 26px; }
.combo::after { margin: 2px 0 0 auto; }
.spin { height: 28px; border: 1px solid #aaa6a2; border-radius: 3px; background: #fff; display: flex; line-height: 26px; overflow: hidden; }
.spin span { flex: 1; padding-left: 4px; }
.spin b { width: 14px; border-left: 1px solid #aaa6a2; background: #f4f2f0; display: flex; flex-direction: column; justify-content: space-between; align-items: flex-start; padding: 5px 0 5px 2px; }
.spin b::before, .spin b::after { content: ""; border: 4px solid transparent; border-bottom: 4px solid #555; border-top: 0; }
.spin b::after { border-top: 4px solid #555; border-bottom: 0; }
.at-min b::after { border-top-color: #bbb; }
.pair { display: grid; grid-template-columns: 218px 218px; gap: 6px; align-items: center; }
.g-grid .pair .combo { margin-bottom: 1px; }
.stack { display: grid; gap: 8px; }
.row-label { display: block; height: 20px; }
.g-grid .row-label { margin: 0 0 7px; }
.g-grid .pair + .row-label { margin: 6px 0 8px; }
.g-grid .pair + .row-label.last { margin-top: 7px; }
.option { display: flex; align-items: center; gap: 5px; height: 20px; margin-top: 13px; }
.g-export .pair + .option { margin-top: 10px; }
.g-export { padding-top: 13px; }
.scrollbar { width: 14px; border-left: 1px solid #bcb8b4; display: flex; flex-direction: column; background: #e3dfdb; }
.sb-up, .sb-down { height: 14px; background: #f8f6f4; display: grid; place-items: center; }
.sb-up { border-bottom: 1px solid #bcb8b4; }
.sb-down { border-top: 1px solid #bcb8b4; }
.sb-up::after, .sb-down::after { content: ""; border: 4px solid transparent; border-bottom: 4px solid #444; border-top: 0; margin-right: 2px; }
.sb-down::after { border-top: 4px solid #444; border-bottom: 0; }
.sb-thumb { height: 270px; background: linear-gradient(90deg, #fdfcfb, #efedeb); border-bottom: 1px solid #bcb8b4; }
.sb-track { flex: 1; }

.status { height: 34px; display: flex; background: #efebe7; line-height: 35px; padding-left: 6px; }
.size-text { width: 839px; }
.pos-text { width: 324px; display: flex; gap: 6px; }
.zoom-combo { width: 207px; height: 29px; margin: 3px 7px 0 0; border: 1px solid #aaa6a2; border-radius: 3px; background: #fff; display: flex; line-height: 26px; }
.zoom-combo span { flex: 1; padding-left: 3px; }
.zoom-combo b { width: 20px; border-left: 1px solid #aaa6a2; background: #f6f4f2; }
.zoom-combo b::after { margin: 12px 5px; }
.desktop-bottom { height: 3px; background: #a5a29f; border-top: 1px solid #777; }
.desktop-bottom i { display: block; width: 118px; height: 3px; background: #000; margin-top: -1px; }
```
FILE: rulers.js
```js
// Ruler ticks every 5 mm, longer every 25 mm, labelled every 50 mm; page grid every 10 mm.
const STEP = 12.052;
const h = [], v = [], grid = [];
const rect = (x, y, w, ht, c) => `<rect x="${x}" y="${y}" width="${w}" height="${ht}" fill="${c}"/>`;

for (let k = -17; k <= 59; k++) {
  const x = Math.floor(275 + STEP * k);
  const len = k % 10 === 0 ? 24 : k % 5 === 0 ? 8 : 5;
  h.push(rect(x, 153 - len, 1, len, '#333'));
  if (k % 10 === 0) h.push(`<text x="${x + 2}" y="143">${k * 5}</text>`);
}
h.push(rect(526, 129, 1, 24, '#f00'));

for (let k = -2; k <= 61; k++) {
  const y = Math.floor(179.4 + STEP * k);
  const major = k === -2 || (k >= 0 && k % 10 === 0);
  const len = major ? 24 : k > 0 && k % 5 === 0 ? 8 : 5;
  v.push(rect(64 - len, y, len, 1, '#333'));
  if (major) v.push(`<text text-anchor="end" transform="translate(54 ${y + 4}) rotate(-90)">${Math.max(k, 0) * 5}</text>`);
}
v.push(rect(40, 361, 24, 1, '#e00'));

for (let k = 0; k <= 20; k++) grid.push(`<rect x="${Math.floor(308.3 + 24.1 * k)}" y="180" width="1" height="716"/>`);
for (let k = 0; k <= 29; k++) grid.push(`<rect x="309" y="${Math.floor(179.4 + 24.104 * k)}" width="506" height="1"/>`);

document.getElementById('ruler-h').innerHTML = h.join('');
document.getElementById('ruler-v').innerHTML = v.join('');
document.getElementById('grid').innerHTML = grid.join('');
```
